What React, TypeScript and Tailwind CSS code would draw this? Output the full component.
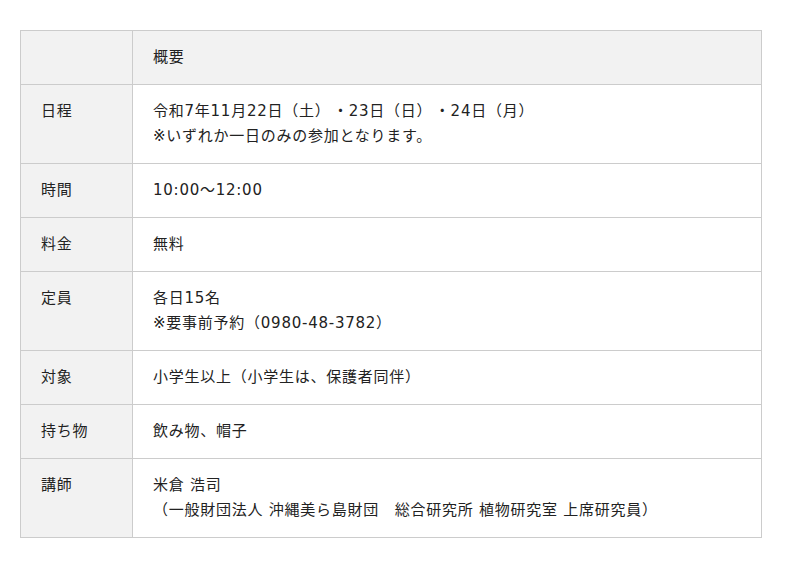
import React from 'react';

type Row = { label: string; lines: React.ReactNode[] };

const Dot = () => <span className="ml-[10px]">・</span>;

const rows: Row[] = [
  {
    label: '日程',
    lines: [
      <>令和7年11月22日（土）<Dot />23日（日）<Dot />24日（月）</>,
      '※いずれか一日のみの参加となります。',
    ],
  },
  { label: '時間', lines: ['10:00〜12:00'] },
  { label: '料金', lines: ['無料'] },
  { label: '定員', lines: ['各日15名', '※要事前予約（0980-48-3782）'] },
  { label: '対象', lines: ['小学生以上（小学生は、保護者同伴）'] },
  { label: '持ち物', lines: ['飲み物、帽子'] },
  { label: '講師', lines: ['米倉 浩司', '（一般財団法人 沖縄美ら島財団　総合研究所 植物研究室 上席研究員）'] },
];

const App: React.FC = () => {
  return (
    <div className="bg-white min-h-screen pt-[30px] px-5 font-['DejaVu_Sans','Noto_Sans_CJK_JP',sans-serif] text-[15px] leading-[25px] tracking-[0.05em] text-[#222]">
      <table className="w-[742px] border-collapse">
        <thead>
          <tr className="bg-[#f2f2f2]">
            <th className="w-[112px] border border-[#ccc] px-5 py-[14px]"></th>
            <th className="border border-[#ccc] px-5 py-[14px] text-left font-normal">概要</th>
          </tr>
        </thead>
        <tbody>
          {rows.map((row) => (
            <tr key={row.label}>
              <th className="w-[112px] bg-[#f2f2f2] border border-[#ccc] px-5 py-[14px] text-left font-normal align-top whitespace-nowrap">
                {row.label}
              </th>
              <td className="border border-[#ccc] px-5 py-[14px] align-top">
                {row.lines.map((line, i) => (
                  <div key={i}>{line}</div>
                ))}
              </td>
            </tr>
          ))}
        </tbody>
      </table>
    </div>
  );
};

export default App;
